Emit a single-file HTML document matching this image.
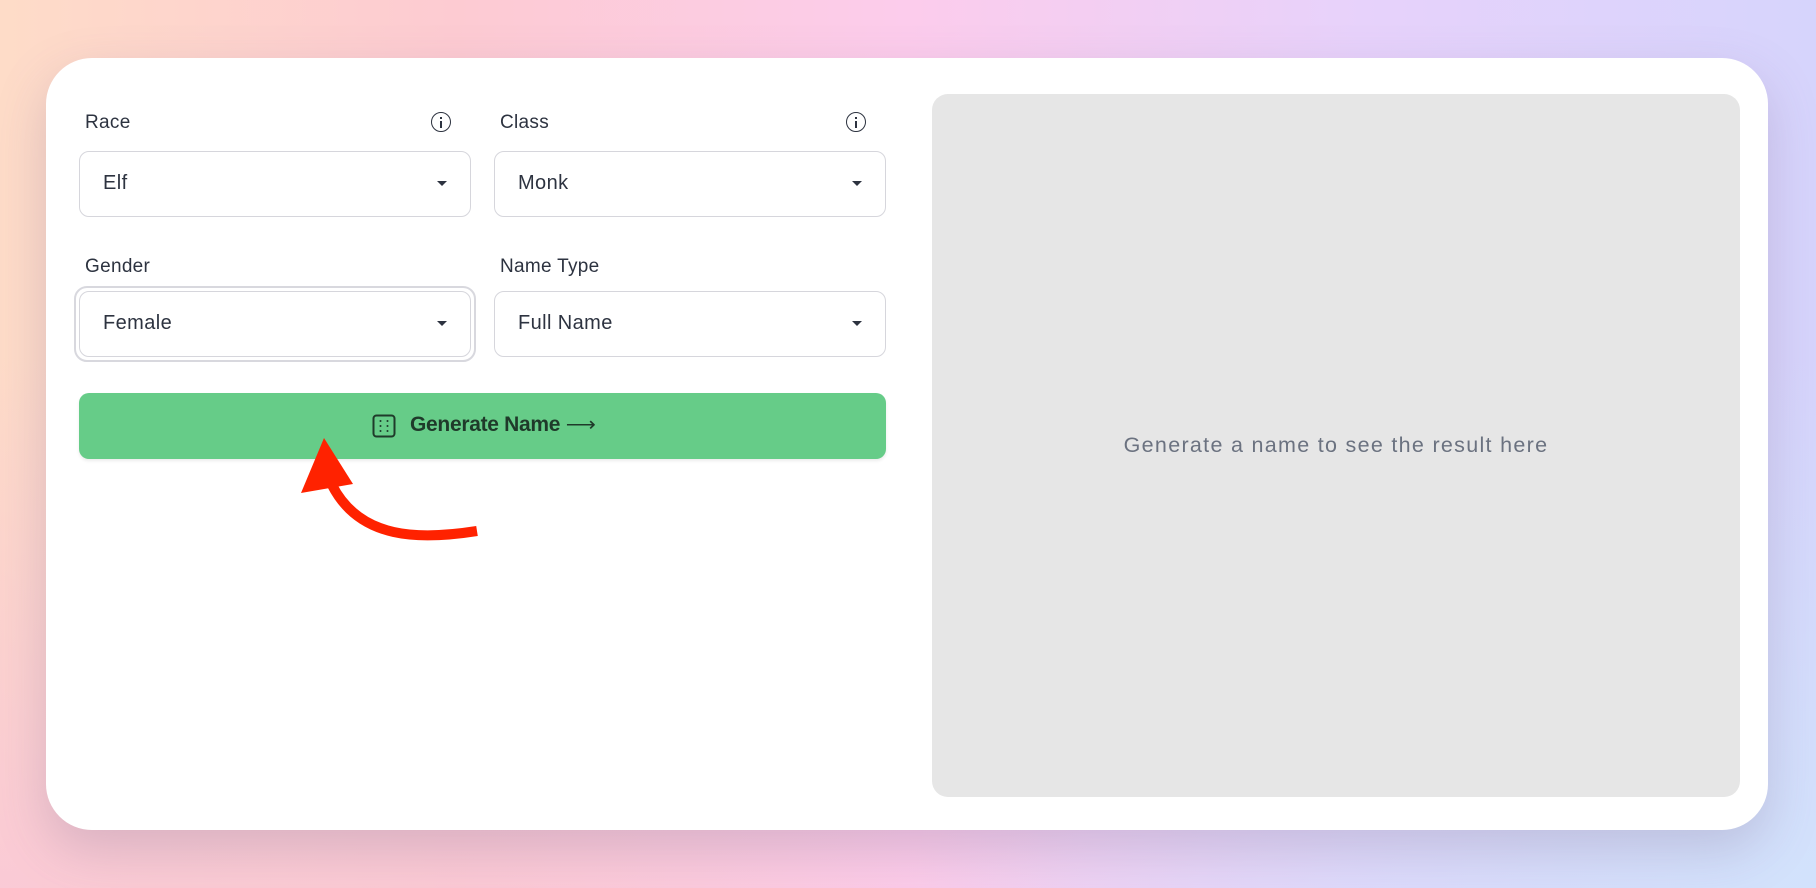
<!DOCTYPE html>
<html><head><meta charset="utf-8"><style>
*{box-sizing:border-box;margin:0;padding:0}
body{width:1816px;height:888px;overflow:hidden;font-family:"Liberation Sans",sans-serif;
background:linear-gradient(90deg,#fedcc8 0%,#fdcbd2 25%,#fcccec 50%,#e7d2fb 75%,#d6d4fc 100%);position:relative}
.ov{position:absolute;inset:0;background:radial-gradient(ellipse 60% 60% at 0% 100%,rgba(250,200,215,0.9),rgba(250,200,215,0) 100%),radial-gradient(ellipse 50% 60% at 100% 100%,rgba(210,228,252,0.9),rgba(210,228,252,0) 100%)}
.card{position:absolute;left:46px;top:58px;width:1722px;height:772px;background:#fff;border-radius:46px;box-shadow:0 20px 50px rgba(120,100,140,0.25)}
.panel{position:absolute;left:932px;top:94px;width:808px;height:703px;background:#e6e6e6;border-radius:16px;display:flex;align-items:center;justify-content:center;color:#6b7280;font-size:21.5px;letter-spacing:1.3px}
.lbl{position:absolute;font-size:19px;color:#2d3340;letter-spacing:0.3px}
.sel{position:absolute;width:392px;height:66px;border:1.5px solid #d6d6dc;border-radius:10px;font-size:20px;color:#2d3340;padding-left:23px;line-height:63px;letter-spacing:0.4px}
.sel:after{content:"";position:absolute;right:23px;top:29px;border-left:5px solid transparent;border-right:5px solid transparent;border-top:5px solid #2d3340}
.info{position:absolute;width:20px;height:20px;border:1.6px solid #2d3340;border-radius:50%}
.info:before{content:"";position:absolute;left:7.5px;top:4px;width:2px;height:2px;background:#2d3340}
.info:after{content:"";position:absolute;left:7.5px;top:7.5px;width:2px;height:7px;background:#2d3340}
.btn{position:absolute;left:79px;top:393px;width:807px;height:66px;background:#66cc88;border-radius:10px;box-shadow:0 2px 3px rgba(0,0,0,0.08)}
.bt{position:absolute;left:410px;top:412px;font-size:21px;font-weight:bold;color:#1f3a2a;letter-spacing:-0.3px}
</style></head><body><div class="ov"></div>
<div class="card"></div>
<div class="panel">Generate a name to see the result here</div>
<div class="lbl" style="left:85px;top:112px">Race</div>
<div class="info" style="left:431px;top:112px"></div>
<div class="lbl" style="left:500px;top:112px">Class</div>
<div class="info" style="left:846px;top:112px"></div>
<div class="sel" style="left:79px;top:151px">Elf</div>
<div class="sel" style="left:494px;top:151px">Monk</div>
<div class="lbl" style="left:85px;top:256px">Gender</div>
<div class="lbl" style="left:500px;top:256px">Name Type</div>
<div style="position:absolute;left:74px;top:286px;width:402px;height:76px;border:2.5px solid #d8d8de;border-radius:13px"></div>
<div class="sel" style="left:79px;top:291px">Female</div>
<div class="sel" style="left:494px;top:291px">Full Name</div>
<div class="btn"></div>
<svg style="position:absolute;left:372px;top:414px" width="24" height="24" viewBox="0 0 24 24"><rect x="1.5" y="1.5" width="21" height="21" rx="3" fill="none" stroke="#1f3a2a" stroke-width="2"/><g fill="#1f3a2a"><circle cx="8.5" cy="7" r="1"/><circle cx="8.5" cy="12" r="1"/><circle cx="8.5" cy="17" r="1"/><circle cx="15.5" cy="7" r="1"/><circle cx="15.5" cy="12" r="1"/><circle cx="15.5" cy="17" r="1"/></g></svg>
<div class="bt">Generate Name <span style="font-weight:normal">⟶</span></div>
<svg style="position:absolute;left:0;top:0" width="1816" height="888"><path d="M477 531 C420 540 360 540 332 485" fill="none" stroke="#ff2200" stroke-width="10"/><polygon points="324,438 301,493 353,484" fill="#ff2200"/></svg>
</body></html>
